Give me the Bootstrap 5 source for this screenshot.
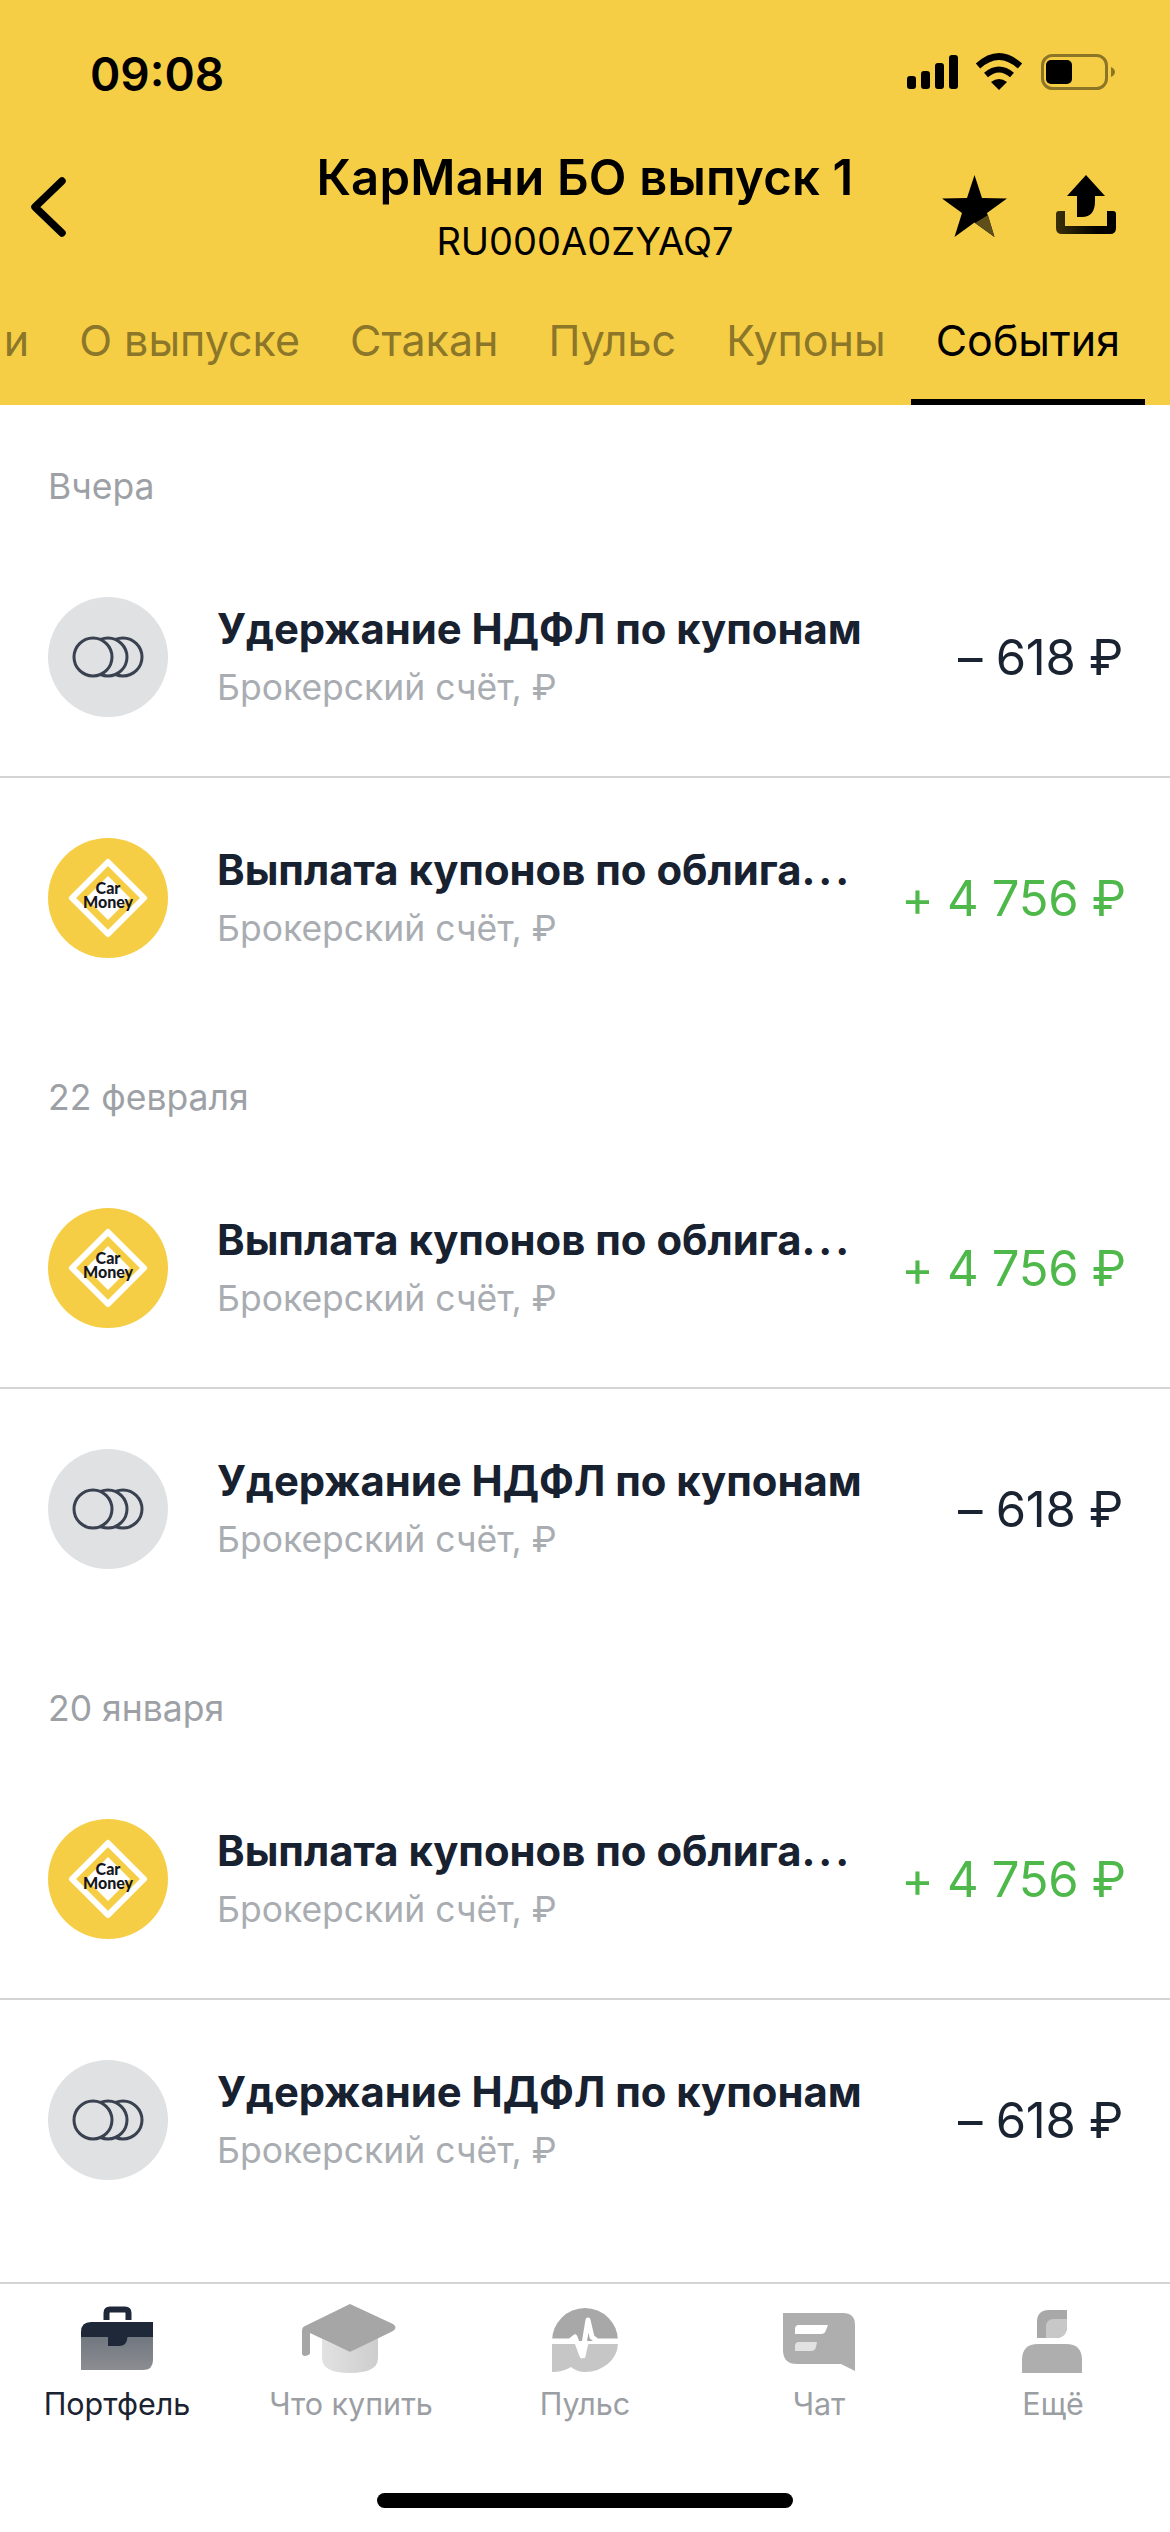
<!DOCTYPE html>
<html lang="ru">
<head>
    <meta charset="UTF-8">
    <meta name="viewport" content="width=device-width, initial-scale=1, shrink-to-fit=no">
    <link rel="stylesheet" href="https://cdn.jsdelivr.net/npm/bootstrap@5.3.0/dist/css/bootstrap.min.css">
    <style>
        body {
            font-family: Inter, "Liberation Sans", sans-serif;
            background: #fff;
        }
        .app-shell {
            height: 2532px;
        }
        .top-head {
            background: #f6ce46;
            height: 405px;
        }
        .status-row {
            height: 150px;
            padding: 53px 55px 0 90px;
        }
        .clock {
            font-size: 46px;
            font-weight: 600;
            line-height: 42px;
            color: #000;
        }
        .status-icons {
            height: 37px;
        }
        .nav-row {
            height: 135px;
        }
        .nav-side {
            width: 300px;
        }
        .nav-side-end {
            padding-right: 54px;
            padding-top: 25px;
            gap: 49px;
        }
        .nav-side-start {
            padding-left: 30px;
            padding-top: 27px;
        }
        .head-title {
            font-size: 49px;
            font-weight: 600;
            letter-spacing: .2px;
            line-height: 56px;
            color: #000;
        }
        .head-sub {
            font-size: 38px;
            line-height: 50px;
            margin-top: 10px;
            color: #000;
        }
        .tab-strip {
            padding-right: 25px;
            overflow: hidden;
        }
        .tab-lnk {
            flex-shrink: 0;
            padding: 30px 25px 30px;
            height: 120px;
            font-size: 43px;
            line-height: 50px;
            color: #8b7629;
        }
        .tab-lnk.active {
            color: #000;
            border-bottom: 6px solid #000;
        }
        .ev-main {
            padding-top: 2px;
        }
        .day-head {
            height: 131px;
            padding: 56px 48px 0;
            font-size: 35.5px;
            line-height: 48px;
            color: #9da1a6;
        }
        .ev-list {
            --bs-list-group-border-width: 2px;
            --bs-list-group-border-color: #d3d4d5;
            --bs-list-group-item-padding-x: 48px;
            --bs-list-group-item-padding-y: 0;
        }
        .ev-row {
            height: 240px;
            gap: 49px;
        }
        .ev-icon {
            width: 120px;
            height: 120px;
            flex-shrink: 0;
        }
        .ev-text {
            padding-top: 4px;
        }
        .ev-title {
            font-size: 41.8px;
            font-weight: 700;
            line-height: 57px;
            color: #182130;
        }
        .ev-dots {
            letter-spacing: 3px;
        }
        .ev-sub {
            font-size: 35.5px;
            line-height: 59px;
            color: #a9adb2;
        }
        .ev-sum {
            font-size: 49px;
            letter-spacing: -.3px;
            color: #1a2331;
            margin-right: -1px;
            margin-top: 2px;
        }
        .ev-sum-plus {
            color: #4fb84a;
        }
        .tab-foot {
            border-top: 2px solid #d3d4d5;
            padding-top: 19px;
            padding-bottom: 24px;
        }
        .foot-item {
            flex: 1 1 0;
            font-size: 30.500px;
            line-height: 40px;
            color: #9b9ea3;
        }
        .foot-item svg {
            margin-bottom: 9px;
        }
        .foot-active {
            color: #1b2330;
        }
        .home-bar {
            width: 416px;
            height: 15px;
            margin-top: 69px;
            background: #000;
        }
    </style>
    <title>КарМани БО выпуск 1</title>
</head>
<body>

    <svg width="0" height="0" class="position-absolute">
        <defs>
            <linearGradient id="tray-grad" x1="0" x2="1" y1="0" y2="0">
                <stop offset="0" stop-color="#3a3008"/>
                <stop offset="0.7" stop-color="#000"/>
            </linearGradient>
            <linearGradient id="case-grad" x1="0" x2="0" y1="0" y2="1">
                <stop offset="0" stop-color="#717780"/>
                <stop offset="1" stop-color="#8b8d91"/>
            </linearGradient>
            <linearGradient id="cap-grad" x1="0" x2="1" y1="0" y2="0">
                <stop offset="0" stop-color="#e2e2e2"/>
                <stop offset="1" stop-color="#cdcdcd"/>
            </linearGradient>
            <symbol id="coins-ic" viewBox="0 0 120 120">
                <circle cx="60" cy="60" r="60" fill="#dfe1e2"/>
                <g fill="#dfe1e2" stroke="#3a4150" stroke-width="3">
                    <circle cx="75" cy="60" r="19"/>
                    <circle cx="60" cy="60" r="19"/>
                    <circle cx="45" cy="60" r="19"/>
                </g>
            </symbol>
            <symbol id="logo-ic" viewBox="0 0 120 120">
                <circle cx="60" cy="60" r="60" fill="#f6ce46"/>
                <path d="M60 24 L96 60 L60 96 L24 60 Z" fill="#f6ce46" stroke="#fff" stroke-width="6" stroke-linejoin="round"/>
                <path d="M60 38 L82 60 L60 82 L38 60 Z" fill="#fff"/>
                <text x="60" y="56" text-anchor="middle" font-family="Lato, sans-serif" font-weight="900" font-size="16" fill="#15171c">Car</text>
                <text x="60" y="70" text-anchor="middle" font-family="Lato, sans-serif" font-weight="900" font-size="16" fill="#15171c">Money</text>
            </symbol>
        </defs>
    </svg>

    <div class="app-shell d-flex flex-column">
        <header class="top-head">
            <div class="status-row d-flex justify-content-between align-items-start">
                <div class="clock">09:08</div>
                <div class="status-icons d-flex">
                    <svg width="208" height="37" viewBox="0 0 208 37">
                        <g fill="#000">
                            <rect x="0" y="23" width="9" height="13" rx="3"/>
                            <rect x="14" y="18" width="9" height="18" rx="3"/>
                            <rect x="28" y="10" width="9" height="26" rx="3"/>
                            <rect x="42" y="2" width="9" height="34" rx="3"/>
                        </g>
                        <g transform="translate(68 0)">
                            <path d="M3 13 Q24 -6 45 13" fill="none" stroke="#000" stroke-width="6.5"/>
                            <path d="M11 22 Q24 11 37 22" fill="none" stroke="#000" stroke-width="6"/>
                            <path d="M16 29 Q24 23 32 29 L24 37 Z" fill="#000"/>
                        </g>
                        <rect x="135.500" y="2.500" width="64" height="33" rx="10" fill="none" stroke="#8c7526" stroke-width="3"/>
                        <rect x="139" y="7" width="26" height="24" rx="5" fill="#000"/>
                        <path d="M204 14 Q208 16 208 19 Q208 22 204 24 Z" fill="#8c7526"/>
                    </svg>
                </div>
            </div>

            <div class="nav-row d-flex align-items-start">
                <div class="nav-side nav-side-start">
                    <svg width="36" height="60" viewBox="0 0 36 60">
                        <path d="M32 4 L5 30 L32 56" fill="none" stroke="#000" stroke-width="7.500" stroke-linecap="round" stroke-linejoin="round"/>
                    </svg>
                </div>
                <div class="flex-grow-1 text-center text-nowrap">
                    <div class="head-title">КарМани БО выпуск 1</div>
                    <div class="head-sub">RU000A0ZYAQ7</div>
                </div>
                <div class="nav-side nav-side-end d-flex justify-content-end align-items-start">
                    <svg width="65" height="62" viewBox="0 0 65 62">
                        <path d="M32.500 0 L40 23 L65 23.500 L45 38 L52.500 62 L32.500 47.500 L12.500 62 L20 38 L0 23.500 L25 23 Z" fill="#000"/>
                        <path d="M33 48 L46 40 L52.500 62 Z" fill="#5e4e1a"/>
                    </svg>
                    <svg width="60" height="60" viewBox="0 0 60 60">
                        <path d="M3 36 H9 V51 H51 V36 H57 Q60 36 60 39 V53 Q60 59 54 59 H6 Q0 59 0 53 V39 Q0 36 3 36 Z" fill="url(#tray-grad)"/>
                        <path d="M30 0 L49 21 H39 V26 Q39 42 26 42 H21 V21 H11 Z" fill="#000"/>
                    </svg>
                </div>
            </div>

            <nav class="nav tab-strip flex-nowrap justify-content-end">
                <a class="nav-link tab-lnk" href="#">и</a>
                <a class="nav-link tab-lnk" href="#">О выпуске</a>
                <a class="nav-link tab-lnk" href="#">Стакан</a>
                <a class="nav-link tab-lnk" href="#">Пульс</a>
                <a class="nav-link tab-lnk" href="#">Купоны</a>
                <a class="nav-link tab-lnk active" href="#">События</a>
            </nav>
        </header>

        <main class="ev-main flex-grow-1 overflow-hidden">
            <div class="day-head">Вчера</div>
            <ul class="list-group list-group-flush ev-list">
                <li class="list-group-item ev-row d-flex align-items-center">
                    <svg class="ev-icon"><use href="#coins-ic"/></svg>
                    <div class="ev-text flex-grow-1 text-nowrap">
                        <div class="ev-title">Удержание НДФЛ по купонам</div>
                        <div class="ev-sub">Брокерский счёт, ₽</div>
                    </div>
                    <div class="ev-sum text-nowrap">– 618 ₽</div>
                </li>
                <li class="list-group-item ev-row d-flex align-items-center">
                    <svg class="ev-icon"><use href="#logo-ic"/></svg>
                    <div class="ev-text flex-grow-1 text-nowrap">
                        <div class="ev-title">Выплата купонов по облига<span class="ev-dots">...</span></div>
                        <div class="ev-sub">Брокерский счёт, ₽</div>
                    </div>
                    <div class="ev-sum ev-sum-plus text-nowrap">+ 4 756 ₽</div>
                </li>
            </ul>

            <div class="day-head">22 февраля</div>
            <ul class="list-group list-group-flush ev-list">
                <li class="list-group-item ev-row d-flex align-items-center">
                    <svg class="ev-icon"><use href="#logo-ic"/></svg>
                    <div class="ev-text flex-grow-1 text-nowrap">
                        <div class="ev-title">Выплата купонов по облига<span class="ev-dots">...</span></div>
                        <div class="ev-sub">Брокерский счёт, ₽</div>
                    </div>
                    <div class="ev-sum ev-sum-plus text-nowrap">+ 4 756 ₽</div>
                </li>
                <li class="list-group-item ev-row d-flex align-items-center">
                    <svg class="ev-icon"><use href="#coins-ic"/></svg>
                    <div class="ev-text flex-grow-1 text-nowrap">
                        <div class="ev-title">Удержание НДФЛ по купонам</div>
                        <div class="ev-sub">Брокерский счёт, ₽</div>
                    </div>
                    <div class="ev-sum text-nowrap">– 618 ₽</div>
                </li>
            </ul>

            <div class="day-head">20 января</div>
            <ul class="list-group list-group-flush ev-list">
                <li class="list-group-item ev-row d-flex align-items-center">
                    <svg class="ev-icon"><use href="#logo-ic"/></svg>
                    <div class="ev-text flex-grow-1 text-nowrap">
                        <div class="ev-title">Выплата купонов по облига<span class="ev-dots">...</span></div>
                        <div class="ev-sub">Брокерский счёт, ₽</div>
                    </div>
                    <div class="ev-sum ev-sum-plus text-nowrap">+ 4 756 ₽</div>
                </li>
                <li class="list-group-item ev-row d-flex align-items-center">
                    <svg class="ev-icon"><use href="#coins-ic"/></svg>
                    <div class="ev-text flex-grow-1 text-nowrap">
                        <div class="ev-title">Удержание НДФЛ по купонам</div>
                        <div class="ev-sub">Брокерский счёт, ₽</div>
                    </div>
                    <div class="ev-sum text-nowrap">– 618 ₽</div>
                </li>
            </ul>
        </main>

        <footer class="tab-foot">
            <div class="d-flex text-center">
                <div class="foot-item foot-active">
                    <svg class="d-block mx-auto" width="100" height="72" viewBox="0 0 100 72">
                        <path d="M39.500 17 V10 Q39.500 6.500 43 6.500 H58 Q61.500 6.500 61.500 10 V17" fill="none" stroke="#1e2838" stroke-width="6"/>
                        <path d="M14 34 H86 V57 Q86 67 76 67 H14 Z" fill="url(#case-grad)"/>
                        <path d="M14 34 V29 Q14 19 24 19 H86 V34 Z" fill="#1e2838"/>
                        <path d="M41 34 H60.500 Q60 43 52 43 H41 Z" fill="#1e2838"/>
                    </svg>
                    Портфель
                </div>
                <div class="foot-item">
                    <svg class="d-block mx-auto" width="100" height="72" viewBox="0 0 100 72">
                        <path d="M21 36 V55 Q21 70 49 70 Q77 70 77 55 V34 L49 49 Z" fill="url(#cap-grad)"/>
                        <path d="M49 1 L92 21 Q97 24.500 92 28 L49 49 L9 30 V50 Q9 52 4 53 Q1 53 1 50 V28 Q1 24 4 23 Z" fill="#a6a6a6"/>
                    </svg>
                    Что купить
                </div>
                <div class="foot-item">
                    <svg class="d-block mx-auto" width="100" height="72" viewBox="0 0 100 72">
                        <path d="M17 38 A33 33 0 0 1 83 38 Z" fill="#a8a8a8"/>
                        <path d="M17 41 H83 A33 29 0 0 1 50 69 Q42 69 36 64 Q28 69 17 69 Z" fill="#c6c6c6"/>
                        <path d="M17 38 H35 L40 34 L47 53 L53 17 L57 34 L62 38 H83" fill="none" stroke="#fff" stroke-width="5" stroke-linejoin="round"/>
                        <path d="M43 38 L46 55 H50 L54 38 Z" fill="#fff"/>
                    </svg>
                    Пульс
                </div>
                <div class="foot-item">
                    <svg class="d-block mx-auto" width="100" height="72" viewBox="0 0 100 72">
                        <path d="M14 10 H74 Q86 10 86 22 V68 L72 61 H28 Q14 61 14 47 Z" fill="#aeaeae"/>
                        <path d="M30 22 H59 L57 27 Q56 31 52 31 H26 V26 Q26 22 30 22 Z" fill="#fff"/>
                        <path d="M30 39 H48 L47 44 Q46 48 42 48 H26 V43 Q26 39 30 39 Z" fill="#e2e2e2"/>
                    </svg>
                    Чат
                </div>
                <div class="foot-item">
                    <svg class="d-block mx-auto" width="100" height="72" viewBox="0 0 100 72">
                        <path d="M34 35 V19 Q34 7 46 7 H64 V23 Q64 35 52 35 Z" fill="#a8a8a8"/>
                        <path d="M43 35 V24 Q43 16 51 16 H64 V23 Q64 35 52 35 Z" fill="#c8c8c8"/>
                        <path d="M19 70 V57 Q19 41 35 41 H63 Q79 41 79 57 V70 Z" fill="#aeaeae"/>
                    </svg>
                    Ещё
                </div>
            </div>
            <div class="home-bar rounded-pill mx-auto"></div>
        </footer>
    </div>

    <script src="https://cdn.jsdelivr.net/npm/bootstrap@5.3.0/dist/js/bootstrap.bundle.min.js"></script>
</body>
</html>
